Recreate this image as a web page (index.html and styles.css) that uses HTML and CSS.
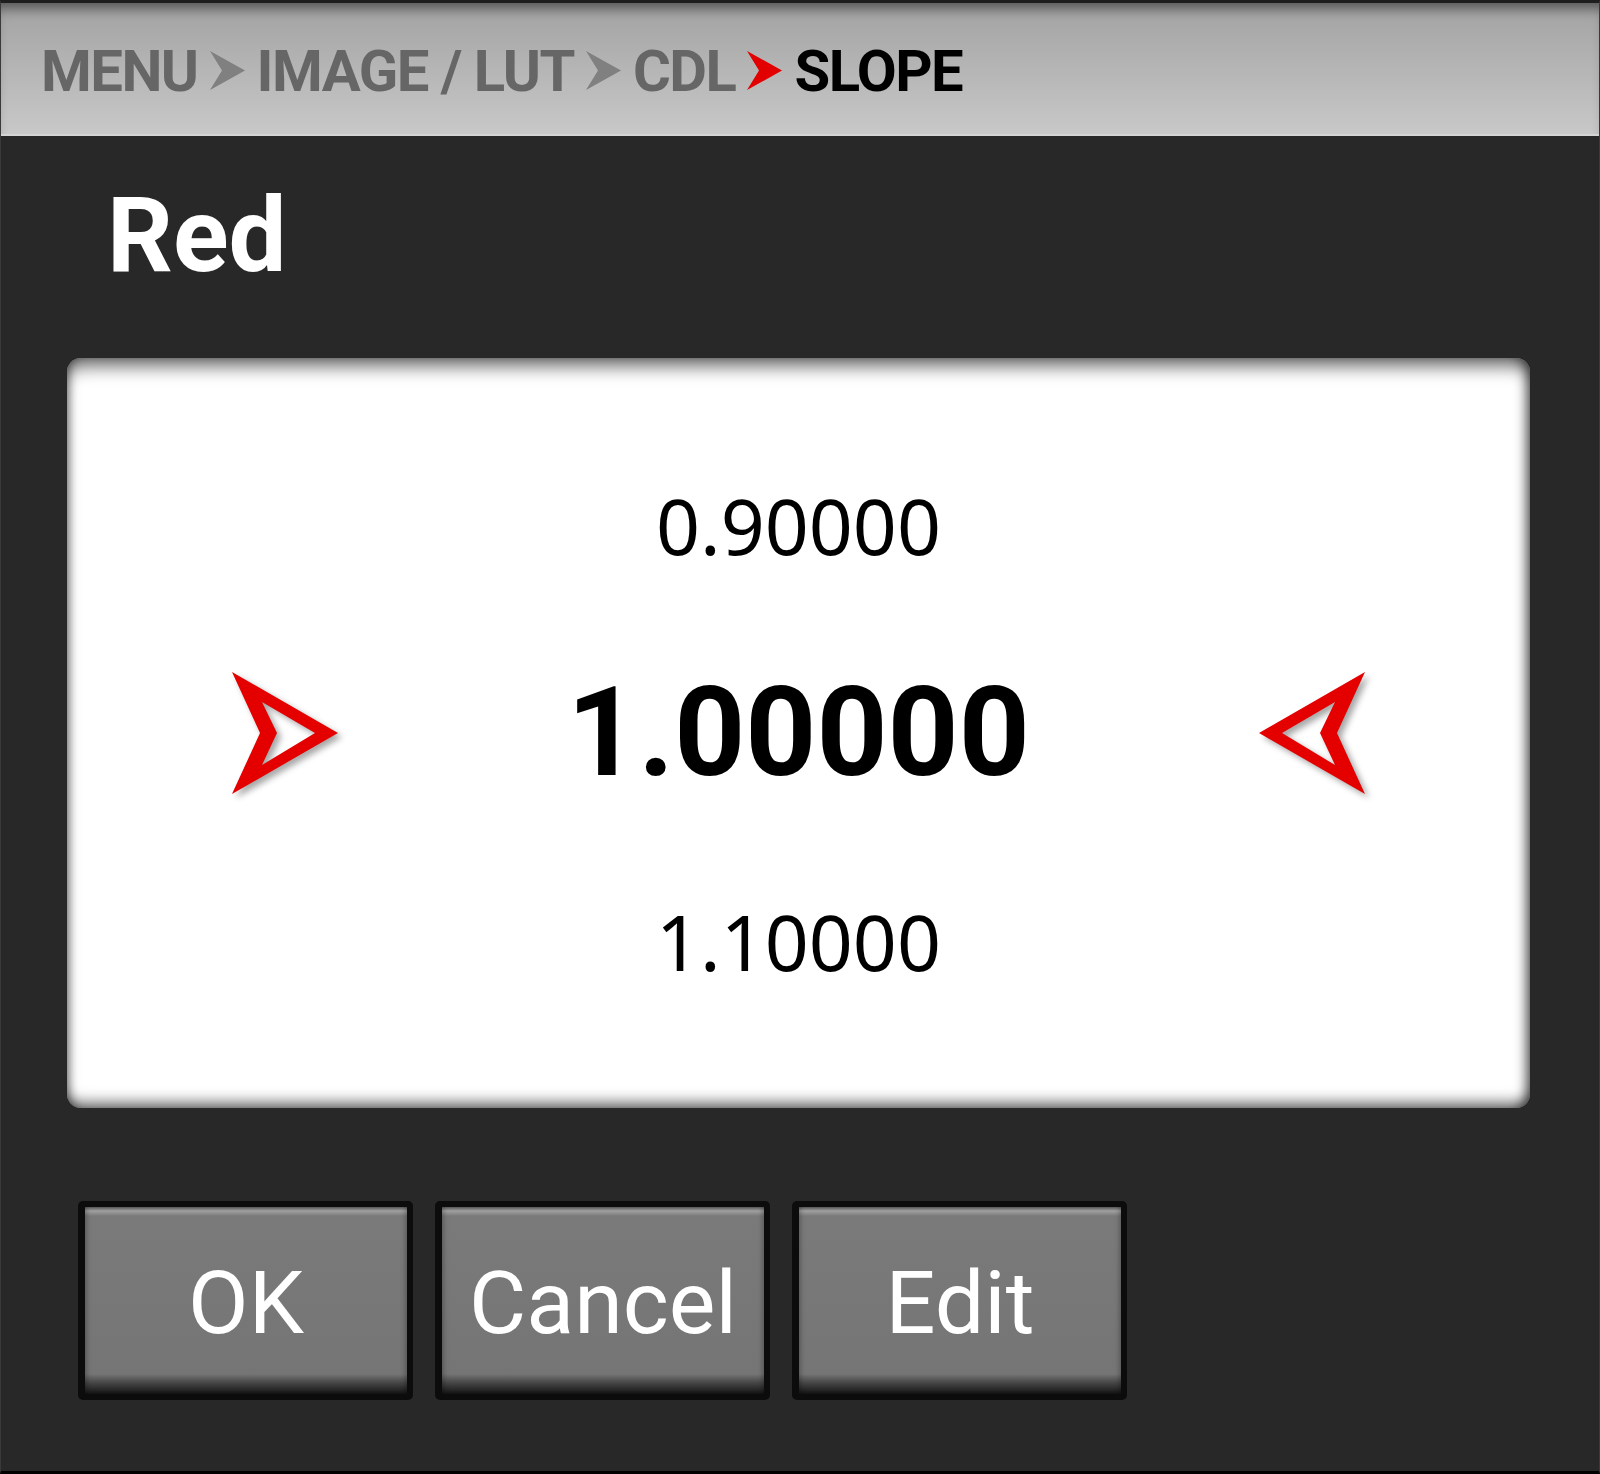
FILE: index.html
```html
<!DOCTYPE html>
<html lang="en">
<head>
    <meta charset="UTF-8">
    <meta name="viewport" content="width=device-width, initial-scale=1.0">
    <title>CDL Slope</title>
    <link rel="stylesheet" href="styles.css">
</head>
<body>

    <div class="screen">

        <div class="breadcrumb">
            <span class="crumb">MENU</span>
            <svg class="crumb-arrow" viewBox="0 0 35 39"><polygon points="0,0 35,19.5 0,39 12,19.5"/></svg>
            <span class="crumb">IMAGE / LUT</span>
            <svg class="crumb-arrow" viewBox="0 0 35 39"><polygon points="0,0 35,19.5 0,39 12,19.5"/></svg>
            <span class="crumb">CDL</span>
            <svg class="crumb-arrow red" viewBox="0 0 35 39"><polygon points="0,0 35,19.5 0,39 12,19.5"/></svg>
            <span class="crumb current">SLOPE</span>
        </div>

        <h1 class="title">Red</h1>

        <div class="value-panel">
            <div class="value-row">
                <span class="value">0.90000</span>
            </div>
            <div class="value-row selected">
                <svg class="pointer" viewBox="0 0 120 130">
                    <path d="M6 4 L112 65 L6 126 L34 65 Z M36 34 L51 65 L36 97 L89 65 Z" fill-rule="evenodd"/>
                </svg>
                <span class="value big">1.00000</span>
                <svg class="pointer flip" viewBox="0 0 120 130">
                    <path d="M6 4 L112 65 L6 126 L34 65 Z M36 34 L51 65 L36 97 L89 65 Z" fill-rule="evenodd"/>
                </svg>
            </div>
            <div class="value-row">
                <span class="value">1.10000</span>
            </div>
        </div>

        <div class="buttons">
            <button class="action-button"><span class="button-face">OK</span></button>
            <button class="action-button"><span class="button-face">Cancel</span></button>
            <button class="action-button"><span class="button-face">Edit</span></button>
        </div>

    </div>

</body>
</html>
```

FILE: styles.css
```css
body {
    margin: 0;
    background: #282828;
    font-family: Roboto, "Noto Sans", sans-serif;
}
.screen {
    box-sizing: border-box;
    width: 1600px;
    height: 1474px;
    background: #282828;
    border-top: 3px solid #1e1e1e;
    border-bottom: 3px solid #000;
    border-left: 1px solid #3a3a3a;
    border-right: 1px solid #3a3a3a;
}

/* top bar */
.breadcrumb {
    display: flex;
    align-items: center;
    gap: 12px;
    height: 133px;
    padding: 4px 0 0 40px;
    box-sizing: border-box;
    border-bottom: 2px solid #d4d4d4;
    background: linear-gradient(#a2a2a2, #c8c8c8);
    box-shadow: inset 0 12px 12px -6px rgba(0,0,0,0.45);
}
.crumb {
    font-size: 58px;
    font-weight: 700;
    line-height: 1;
    letter-spacing: -1.5px;
    color: #666;
}
.crumb.current {
    color: #000;
}
.crumb-arrow {
    width: 35px;
    height: 39px;
    fill: #808080;
}
.crumb-arrow.red {
    fill: #e20000;
}

.title {
    margin: 48px 0 0 106px;
    font-size: 103px;
    font-weight: 700;
    line-height: 1;
    color: #fff;
}

/* value picker */
.value-panel {
    display: flex;
    flex-direction: column;
    justify-content: center;
    width: 1463px;
    height: 750px;
    margin: 71px 0 0 66px;
    background: #fff;
    border-radius: 14px;
    box-shadow: inset 0 14px 18px -6px rgba(0,0,0,0.6),
                inset 0 -12px 14px -6px rgba(0,0,0,0.55),
                inset 8px 0 10px -6px rgba(0,0,0,0.35),
                inset -10px 0 12px -6px rgba(0,0,0,0.5);
}
.value-row {
    display: flex;
    align-items: center;
    justify-content: center;
    height: 208px;
}
.value-row.selected {
    justify-content: space-between;
    padding: 0 159px;
}
.value {
    font-family: "Noto Sans", sans-serif;
    font-size: 77px;
    line-height: 1;
    color: #000;
}
.value.big {
    font-family: Roboto, sans-serif;
    font-size: 124px;
    font-weight: 700;
}
.pointer {
    width: 120px;
    height: 130px;
    fill: #e50000;
    filter: drop-shadow(4px 4px 3px rgba(0,0,0,0.35));
}
.pointer.flip {
    transform: scaleX(-1);
    filter: drop-shadow(-4px 4px 3px rgba(0,0,0,0.35));
}

/* bottom buttons */
.buttons {
    display: flex;
    gap: 22px;
    margin: 93px 0 0 77px;
}
.action-button {
    width: 335px;
    height: 199px;
    padding: 6px 6px 6px 7px;
    border: none;
    border-radius: 5px;
    background: #0c0c0c;
}
.button-face {
    display: flex;
    align-items: center;
    justify-content: center;
    height: 100%;
    padding-top: 3px;
    box-sizing: border-box;
    font-family: Roboto, sans-serif;
    font-size: 88px;
    color: #fff;
    background: linear-gradient(#5e5e5e 0px, #a0a0a0 4px, #7a7a7a 9px, #757575 calc(100% - 20px), #4a4a4a calc(100% - 12px), #141414 100%);
    box-shadow: inset 4px 0 4px -2px rgba(0,0,0,0.25),
                inset -4px 0 4px -2px rgba(0,0,0,0.25);
}
```
